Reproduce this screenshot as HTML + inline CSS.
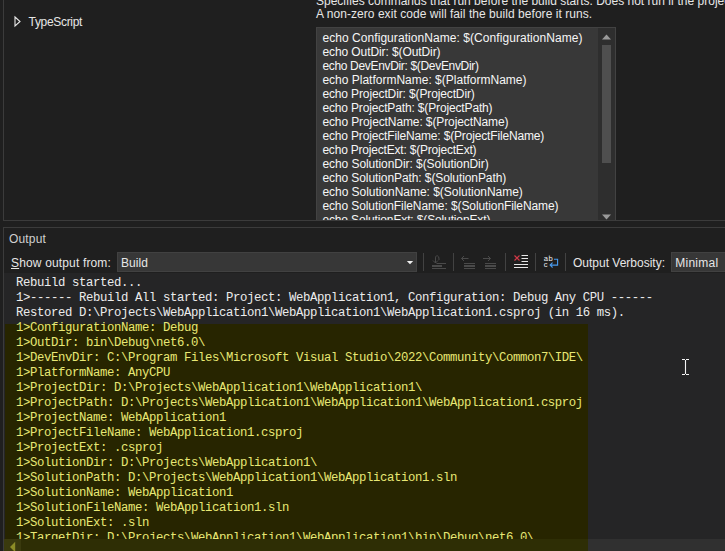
<!DOCTYPE html>
<html><head><meta charset="utf-8"><title>Output</title>
<style>
html,body{margin:0;padding:0;background:#1f1f1f;}
body{width:725px;height:551px;overflow:hidden;position:relative;font-family:"Liberation Sans",sans-serif;font-size:12px;color:#e4e4e4;}
.abs{position:absolute;white-space:pre;}
.ui{font-family:"Liberation Sans",sans-serif;font-size:12px;line-height:14px;color:#e6e6e6;}
#top{position:absolute;left:3px;top:-2px;width:730px;height:223px;border:1px solid #3b3b3b;background:#1f1f1f;box-sizing:border-box;}
#out{position:absolute;left:3px;top:227px;width:730px;height:340px;border:1px solid #3b3b3b;background:#1f1f1f;box-sizing:border-box;}
#ta{position:absolute;left:316px;top:27px;width:300px;height:193px;background:#383838;border:1px solid #424242;border-bottom:none;box-sizing:border-box;overflow:hidden;}
.tl{position:absolute;left:5.4px;font-size:12px;line-height:14px;height:14px;color:#f6f6f6;white-space:pre;}
#sb{position:absolute;left:598px;top:28px;width:17px;height:192px;background:#2e2e2e;}
#thumb{position:absolute;left:602px;top:45px;width:9px;height:118px;background:#4f4f4f;}
#mono{position:absolute;left:4px;top:273px;width:721px;height:278px;background:#252526;overflow:hidden;}
#hl{position:absolute;left:5px;top:323.5px;width:582.5px;height:228px;background:#272500;}
#hsb{position:absolute;left:4px;top:538.5px;width:721px;height:13px;background:#303030;}
#hsbh{position:absolute;left:5px;top:538.5px;width:582.5px;height:13px;background:#2e2e05;}
#hsbb{position:absolute;left:4px;top:538.5px;width:17px;height:13px;background:#3a3a0e;}
#mtext{position:absolute;left:4px;top:274px;width:721px;height:264.5px;overflow:hidden;}
.m{position:absolute;left:12px;top:2px;font-family:"Liberation Mono",monospace;font-size:12.3px;letter-spacing:-0.381px;line-height:15px;white-space:pre;color:#ececec;}
.y{color:#e8e874;}
.dd{position:absolute;background:#373737;border:1px solid #414141;box-sizing:border-box;}
.sep{position:absolute;top:253px;width:1px;height:18px;background:#424242;}
</style></head><body>
<div id="top"></div>
<div id="out"></div>

<!-- tree item -->
<svg class="abs" style="left:13px;top:15px" width="10" height="14" viewBox="0 0 10 14"><path d="M2 2 L7 6.5 L2 11 Z" fill="none" stroke="#e8e8e8" stroke-width="1.1"/></svg>
<div class="abs ui" id="ts" style="left:28.6px;top:15px;letter-spacing:-0.330px">TypeScript</div>

<!-- description -->
<div class="abs ui" id="d1" style="left:316px;top:-6.5px;">Specifies commands that run before the build starts. Does not run if the project is up to date.</div>
<div class="abs ui" id="d2" style="left:316px;top:7px;letter-spacing:0.048px">A non-zero exit code will fail the build before it runs.</div>

<!-- textarea -->
<div id="ta">
<div id="ta0" class="tl" style="top:3px;letter-spacing:0.062px">echo ConfigurationName: $(ConfigurationName)</div>
<div id="ta1" class="tl" style="top:17px;letter-spacing:-0.088px">echo OutDir: $(OutDir)</div>
<div id="ta2" class="tl" style="top:31px;letter-spacing:-0.328px">echo DevEnvDir: $(DevEnvDir)</div>
<div id="ta3" class="tl" style="top:45px;letter-spacing:0.001px">echo PlatformName: $(PlatformName)</div>
<div id="ta4" class="tl" style="top:59px;letter-spacing:-0.125px">echo ProjectDir: $(ProjectDir)</div>
<div id="ta5" class="tl" style="top:73px;letter-spacing:-0.146px">echo ProjectPath: $(ProjectPath)</div>
<div id="ta6" class="tl" style="top:87px;letter-spacing:-0.106px">echo ProjectName: $(ProjectName)</div>
<div id="ta7" class="tl" style="top:101px;letter-spacing:-0.157px">echo ProjectFileName: $(ProjectFileName)</div>
<div id="ta8" class="tl" style="top:115px;letter-spacing:-0.202px">echo ProjectExt: $(ProjectExt)</div>
<div id="ta9" class="tl" style="top:129px;letter-spacing:-0.059px">echo SolutionDir: $(SolutionDir)</div>
<div id="ta10" class="tl" style="top:143px;letter-spacing:-0.088px">echo SolutionPath: $(SolutionPath)</div>
<div id="ta11" class="tl" style="top:157px;letter-spacing:-0.031px">echo SolutionName: $(SolutionName)</div>
<div id="ta12" class="tl" style="top:171px;letter-spacing:-0.096px">echo SolutionFileName: $(SolutionFileName)</div>
<div id="ta13" class="tl" style="top:185px;letter-spacing:-0.132px">echo SolutionExt: $(SolutionExt)</div>
</div>
<div id="sb"></div><div id="thumb"></div>
<svg class="abs" style="left:602px;top:34px" width="9" height="6" viewBox="0 0 9 6"><path d="M0 5.5 L4.5 0.5 L9 5.5 Z" fill="#999"/></svg>
<svg class="abs" style="left:602px;top:214px" width="9" height="6" viewBox="0 0 9 6"><path d="M0 0.5 L4.5 5.5 L9 0.5 Z" fill="#999"/></svg>

<!-- output header -->
<div class="abs ui" id="otitle" style="left:9px;top:232px;color:#d0d0d0;letter-spacing:0.161px">Output</div>
<div class="abs ui" id="sof" style="left:11px;top:256px;letter-spacing:0.153px"><span style="text-decoration:underline">S</span>how output from:</div>
<div class="dd" style="left:117px;top:252px;width:300px;height:20px;"></div>
<div class="abs ui" id="build" style="left:121px;top:256px;letter-spacing:0.062px">Build</div>
<svg class="abs" style="left:406px;top:260px" width="8" height="5" viewBox="0 0 8 5"><path d="M0.8 1 L7.2 1 L4 4.2 Z" fill="#f0f0f0"/></svg>
<div class="sep" style="left:423px"></div>
<div class="sep" style="left:453px"></div>
<div class="sep" style="left:505px"></div>
<div class="sep" style="left:535px"></div>
<div class="sep" style="left:565px"></div>

<!-- toolbar icons -->
<svg class="abs" style="left:428px;top:250px" width="136" height="24" viewBox="428 250 136 24">
 <g stroke="#4a4a4a" fill="none" stroke-width="1">
  <!-- go to message -->
  <path d="M439 260 C439.5 255,435.5 254.5,435.5 258 L435.5 263"/>
  <path d="M433 260.5 L435.5 263 L438 260.5"/>
  <path d="M436.5 263.5 H446"/>
  <path d="M432 268.5 H446"/>
  <rect x="432" y="265" width="10" height="2" fill="#4a4a4a" stroke="none"/>
  <!-- prev -->
  <path d="M461.5 258.5 H468.5 M464 256 L461.5 258.5 L464 261"/>
  <path d="M464 263.5 H475 M464 268.5 H475"/>
  <rect x="464" y="265" width="11" height="2" fill="#4a4a4a" stroke="none"/>
  <!-- next -->
  <path d="M483 258.5 H490.5 M488 256 L490.5 258.5 L488 261"/>
  <path d="M485 263.5 H496 M485 268.5 H496"/>
  <rect x="485" y="265" width="11" height="2" fill="#4a4a4a" stroke="none"/>
 </g>
 <!-- clear all -->
 <path d="M514.5 255.5 L519.5 260.5 M519.5 255.5 L514.5 260.5" stroke="#d23a48" stroke-width="1.1" fill="none"/>
 <path d="M521.5 255.5 H528 M521.5 258.5 H528 M521.5 261.5 H528 M514 264.5 H528 M514 267.5 H528" stroke="#e6e6e6" stroke-width="1" fill="none"/>
 <!-- word wrap -->
 <text x="543.8" y="260.5" font-family="Liberation Sans, sans-serif" font-size="7.6" letter-spacing="0.4" fill="#f0f0f0" style="text-rendering:geometricPrecision">ab</text>
 <text x="543.8" y="267" font-family="Liberation Sans, sans-serif" font-size="7.6" fill="#f0f0f0" style="text-rendering:geometricPrecision">c</text>
 <path d="M554 259.2 H557.6 V265.1 H550.5 M552.6 262.7 L550.1 265.1 L552.6 267.5" stroke="#4a9cf0" stroke-width="1.1" fill="none"/>
</svg>

<div class="abs ui" id="ov" style="left:573px;top:256px;letter-spacing:-0.004px">Output Verbosity:</div>
<div class="dd" style="left:671px;top:252px;width:60px;height:20px;"></div>
<div class="abs ui" id="minimal" style="left:675.2px;top:256px;letter-spacing:0.265px">Minimal</div>

<!-- output text -->
<div id="mono"></div>
<div id="hsb"></div>
<div id="hl"></div>
<div id="hsbh"></div>
<div id="hsbb"></div>
<svg class="abs" style="left:9px;top:541px" width="8" height="10" viewBox="0 0 8 10"><path d="M6.2 0.8 L1 6 L6.2 11.2 Z" fill="#8c8c26"/></svg>
<div id="mtext"><div class="m">Rebuild started...
1>------ Rebuild All started: Project: WebApplication1, Configuration: Debug Any CPU ------
Restored D:\Projects\WebApplication1\WebApplication1\WebApplication1.csproj (in 16 ms).
<span class="y">1>ConfigurationName: Debug
1>OutDir: bin\Debug\net6.0\
1>DevEnvDir: C:\Program Files\Microsoft Visual Studio\2022\Community\Common7\IDE\
1>PlatformName: AnyCPU
1>ProjectDir: D:\Projects\WebApplication1\WebApplication1\
1>ProjectPath: D:\Projects\WebApplication1\WebApplication1\WebApplication1.csproj
1>ProjectName: WebApplication1
1>ProjectFileName: WebApplication1.csproj
1>ProjectExt: .csproj
1>SolutionDir: D:\Projects\WebApplication1\
1>SolutionPath: D:\Projects\WebApplication1\WebApplication1.sln
1>SolutionName: WebApplication1
1>SolutionFileName: WebApplication1.sln
1>SolutionExt: .sln
1>TargetDir: D:\Projects\WebApplication1\WebApplication1\bin\Debug\net6.0\</span></div></div>

<!-- mouse cursor (I-beam) -->
<svg class="abs" style="left:680px;top:357px" width="12" height="20" viewBox="680 357 12 20">
 <path d="M682 359.5 H685 M686 359.5 H689 M682 374.5 H685 M686 374.5 H689 M685.5 360 V374" stroke="#f4f4f4" stroke-width="1.1" fill="none"/>
</svg>
</body></html>
